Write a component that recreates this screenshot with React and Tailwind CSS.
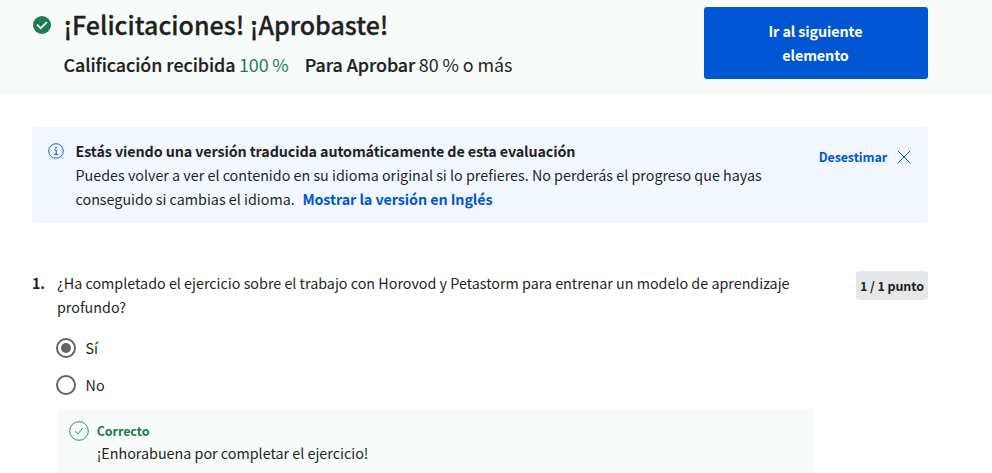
export default function App() {
  return (
    <div className="h-[473px] w-[992px] overflow-hidden bg-white font-['Noto_Sans_CJK_SC','Noto_Sans_CJK_JP',sans-serif] text-[#1f1f1f]">
      <header className="flex h-[95px] items-start justify-between bg-[#f7fbf9] pl-8 pr-16 pt-[7px]">
        <div className="flex">
          <svg className="ml-[1px] mt-[9px] h-[18px] w-[18px]" viewBox="0 0 18 18" fill="none">
            <circle cx="9" cy="9" r="9" fill="#1d7c50" />
            <path d="M4 8.7l3.6 3.6 6.3-6.2" stroke="#fff" strokeWidth="1.8" />
          </svg>
          <div className="ml-[12.5px] whitespace-nowrap">
            <h1 className="-mt-px text-[25px] font-medium leading-9 [-webkit-text-stroke:0.3px]">¡Felicitaciones! ¡Aprobaste!</h1>
            <p className="mt-[10px] flex gap-4 text-[17.9px] leading-6">
              <span><span className="font-medium tracking-[-0.06px] [-webkit-text-stroke:0.2px]">Calificación recibida</span><span className="ml-[3.5px] tracking-[-0.1px] text-[#1d7c50]">100 %</span></span>
              <span><span className="font-medium tracking-[-0.06px] [-webkit-text-stroke:0.2px]">Para Aprobar</span><span className="ml-[3.5px] tracking-[-0.08px]">80 % o más</span></span>
            </p>
          </div>
        </div>
        <button className="flex h-[72px] w-[224px] items-center justify-center rounded-[3px] bg-[#0056d2] pl-12 pr-[49px] text-center text-[14.33px] font-bold leading-6 tracking-[-0.1px] text-white">
          Ir al siguiente elemento
        </button>
      </header>
      <main className="pl-8 pr-16 pt-8">
        <section className="flex h-24 justify-between rounded-[4px] bg-[#f2f7ff] px-4 pt-3">
          <div className="flex whitespace-nowrap">
            <svg className="mt-1 h-4 w-4" viewBox="0 0 16 16" fill="none" stroke="#0056d2">
              <circle cx="8" cy="8" r="7.3" strokeWidth=".9" />
              <path d="M6.3 7h1.9v4.3M6 11.4h4.2" strokeWidth="1" />
              <circle cx="8" cy="4.6" r=".9" fill="#0056d2" stroke="none" />
            </svg>
            <div className="ml-[11.5px] text-[14.32px] leading-6">
              <p className="font-bold tracking-[-0.11px]">Estás viendo una versión traducida automáticamente de esta evaluación</p>
              <p>Puedes volver a ver el contenido en su idioma original si lo prefieres. No perderás el progreso que hayas<br />conseguido si cambias el idioma. <a className="ml-[4.5px] font-bold tracking-[-0.08px] text-[#0056d2]">Mostrar la versión en Inglés</a></p>
            </div>
          </div>
          <button className="mt-1.5 flex h-6 items-center gap-[9px] text-[12.5px] font-bold tracking-[-0.12px] text-[#0056d2]">
            Desestimar
            <svg className="h-4 w-4" viewBox="0 0 16 16" fill="none" stroke="#0056d2"><path d="M1.8 1.8l12.4 12.4M14.2 1.8L1.8 14.2" /></svg>
          </button>
        </section>
        <section className="mt-12 flex items-start text-[14.32px] leading-6">
          <span className="w-[25px] font-bold tracking-[-0.2px]">1.</span>
          <div className="w-[757px]">
            <p>¿Ha completado el ejercicio sobre el trabajo con Horovod y Petastorm para entrenar un modelo de aprendizaje profundo?</p>
            <div className="-ml-px mt-[17px] flex h-6 items-center gap-[9.6px]">
              <span className="flex h-5 w-5 items-center justify-center rounded-full border-2 border-[#636363]"><span className="h-[10px] w-[10px] rounded-full bg-[#636363]" /></span>Sí
            </div>
            <div className="-ml-px mt-[13px] flex h-6 items-center gap-[9.6px]">
              <span className="h-5 w-5 rounded-full border-2 border-[#636363]" />No
            </div>
            <div className="mt-3 flex h-20 bg-[#f7fbf9] pl-3 pt-3">
              <svg className="h-5 w-5" viewBox="0 0 20 20" fill="none" stroke="#1d7c50"><circle cx="10" cy="10" r="9.3" strokeWidth=".9" /><path d="M6 10.2l2.9 2.7 4.8-5.8" strokeWidth=".9" /></svg>
              <div className="ml-[7.7px]">
                <p className="text-[12.5px] font-bold leading-5 tracking-[-0.08px] text-[#1d7c50]">Correcto</p>
                <p>¡Enhorabuena por completar el ejercicio!</p>
              </div>
            </div>
          </div>
          <span className="ml-auto flex h-[29px] w-[72px] items-center justify-center whitespace-nowrap rounded-[4px] bg-[#e5e7e8] text-[12.5px] font-bold tracking-[-0.1px]">1 / 1 punto</span>
        </section>
      </main>
    </div>
  );
}
